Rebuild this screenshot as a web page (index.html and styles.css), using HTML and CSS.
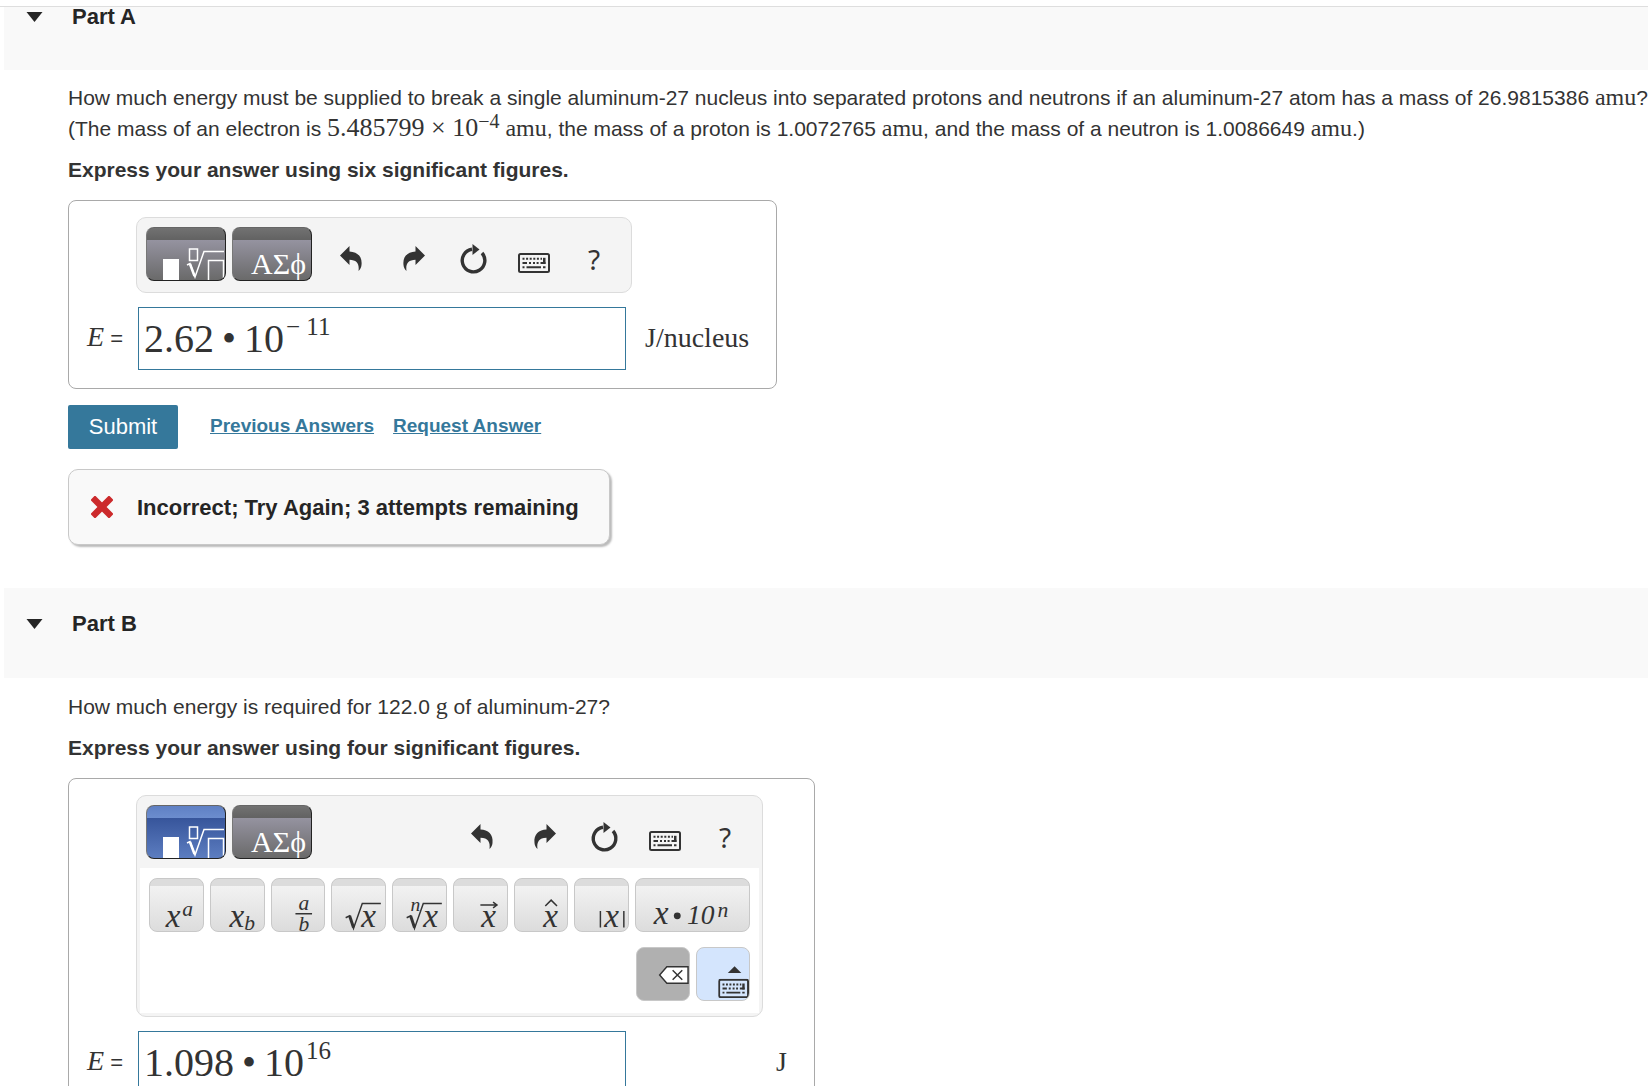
FILE: index.html
```html
<!DOCTYPE html>
<html lang="en">
<head>
<meta charset="utf-8">
<title>Nuclear binding energy</title>
<link rel="stylesheet" href="styles.css">
</head>
<body>
<svg class="defs" aria-hidden="true">
  <defs>
    <symbol id="undo" viewBox="0 0 60 54"><path d="M16 28.500L25.500 19V24.500C33 25 38.500 29 37.500 38C37.300 40.500 36.300 42.300 34.500 44C35.500 37 33 33 25.500 32.800V38Z"/></symbol>
    <symbol id="redo" viewBox="0 0 60 54"><path d="M41 28.500L31.500 19V24.500C24 25 18.500 29 19.500 38C19.700 40.500 20.700 42.300 22.500 44C21.500 37 24 33 31.500 32.800V38Z"/></symbol>
    <symbol id="reset" viewBox="0 0 60 54"><path d="M28 22.300A11.300 11.300 0 1 0 38 26" fill="none" stroke="#333" stroke-width="3.400"/><path d="M28.500 17L35.500 22.500L28.500 28Z"/></symbol>
    <symbol id="keyboard" viewBox="0 0 32 20"><rect x="1" y="1" width="30" height="18" rx="1.500" fill="none" stroke="#333" stroke-width="2"/><path d="M4.500 5.800H24" fill="none" stroke="#333" stroke-width="2" stroke-dasharray="2 1.600"/><path d="M4.500 10H9M11 10h2M15 10h2M18.600 10h2M22.500 10H27.500M4.500 14.300h2M8.500 14.300H23M25 14.300h2.500" fill="none" stroke="#333" stroke-width="2"/><path d="M25 4.800h2.500V11H25Z"/></symbol>
    <symbol id="template" viewBox="0 0 80 54"><path d="M17 32h16v22H17Z" fill="#fff"/><path d="M43.500 22h8v11.500h-8ZM62.500 54V33.500H77.500V54M41 38l3-1.500L49 50L58 24.500H78" fill="none" stroke="#fff" stroke-width="1.500"/><path d="M44 37l4.500 12" stroke="#fff" stroke-width="2.500"/></symbol>
    <symbol id="caret" viewBox="0 0 16 10"><path d="M0 0H16L8 10Z"/></symbol>
  </defs>
</svg>

<div class="topline"></div>

<section>
  <header class="part part-first">
    <svg class="caret" aria-hidden="true"><use href="#caret"/></svg>
    <h2>Part A</h2>
  </header>
  <div class="content">
    <p>How much energy must be supplied to break a single aluminum-27 nucleus into separated protons and neutrons if an aluminum-27 atom has a mass of 26.9815386 <span class="math">amu</span>?<br>(The mass of an electron is <span class="math number">5.485799 × 10<sup>−4</sup></span> <span class="math">amu</span>, the mass of a proton is 1.0072765 <span class="math">amu</span>, and the mass of a neutron is 1.0086649 <span class="math">amu</span>.)</p>
    <p class="instruction">Express your answer using six significant figures.</p>

    <div class="answer">
      <div class="palette">
        <div class="toolbar">
          <button class="tab" aria-label="Templates"><svg aria-hidden="true"><use href="#template"/></svg></button>
          <button class="tab greek">ΑΣϕ</button>
          <div class="tools">
            <button class="tool" aria-label="Undo"><svg aria-hidden="true"><use href="#undo"/></svg></button>
            <button class="tool" aria-label="Redo"><svg aria-hidden="true"><use href="#redo"/></svg></button>
            <button class="tool" aria-label="Reset"><svg aria-hidden="true"><use href="#reset"/></svg></button>
            <button class="tool" aria-label="Keyboard shortcuts"><svg class="keyboard" aria-hidden="true"><use href="#keyboard"/></svg></button>
            <button class="tool help">?</button>
          </div>
        </div>
      </div>
      <div class="label" id="label-a"><i>E</i> =</div>
      <div class="field" role="textbox" tabindex="0" aria-labelledby="label-a">2.62<b>•</b>10<sup>− 11</sup></div>
      <div class="unit">J/nucleus</div>
    </div>

    <div class="actions">
      <button class="submit">Submit</button>
      <a href="#">Previous Answers</a>
      <a href="#">Request Answer</a>
    </div>

    <div class="feedback">
      <svg viewBox="0 0 22 22" aria-hidden="true"><path d="M4 4L18 18M18 4L4 18" stroke="#cc2a2c" stroke-width="6.500" stroke-linecap="square"/></svg>
      <span>Incorrect; Try Again; 3 attempts remaining</span>
    </div>
  </div>
</section>

<section>
  <header class="part">
    <svg class="caret" aria-hidden="true"><use href="#caret"/></svg>
    <h2>Part B</h2>
  </header>
  <div class="content">
    <p>How much energy is required for 122.0 <span class="math">g</span> of aluminum-27?</p>
    <p class="instruction">Express your answer using four significant figures.</p>

    <div class="answer">
      <div class="palette palette-open">
        <div class="toolbar">
          <button class="tab active" aria-label="Templates"><svg aria-hidden="true"><use href="#template"/></svg></button>
          <button class="tab greek">ΑΣϕ</button>
          <div class="tools">
            <button class="tool" aria-label="Undo"><svg aria-hidden="true"><use href="#undo"/></svg></button>
            <button class="tool" aria-label="Redo"><svg aria-hidden="true"><use href="#redo"/></svg></button>
            <button class="tool" aria-label="Reset"><svg aria-hidden="true"><use href="#reset"/></svg></button>
            <button class="tool" aria-label="Keyboard shortcuts"><svg class="keyboard" aria-hidden="true"><use href="#keyboard"/></svg></button>
            <button class="tool help">?</button>
          </div>
        </div>
        <div class="panel">
          <div class="keys">
            <button class="key"><svg viewBox="0 0 54 54"><text x="16" y="48" class="x">x</text><text x="33" y="37" class="s">a</text></svg></button>
            <button class="key"><svg viewBox="0 0 54 54"><text x="19" y="48" class="x">x</text><text x="34" y="52" class="s">b</text></svg></button>
            <button class="key"><svg viewBox="0 0 54 54"><text x="27" y="31" class="s">a</text><path d="M24 35H41"/><text x="27" y="53" class="s">b</text></svg></button>
            <button class="key"><svg viewBox="0 0 54 54"><path d="M14 39l4-2L22 50L31 24.500H50"/><path d="M18 37l4 12" class="thick"/><text x="30" y="48" class="x">x</text></svg></button>
            <button class="key"><svg viewBox="0 0 54 54"><text x="18" y="32" class="n">n</text><path d="M14 39l4-2L22 50L31 24.500H50"/><path d="M18 37l4 12" class="thick"/><text x="31" y="48" class="x">x</text></svg></button>
            <button class="key"><svg viewBox="0 0 54 54"><path d="M27 26H44M40 23l4 3l-4 3"/><text x="28" y="48" class="x">x</text></svg></button>
            <button class="key"><svg viewBox="0 0 54 54"><path d="M31 27l6-6l6 6"/><text x="29" y="48" class="x">x</text></svg></button>
            <button class="key"><svg viewBox="0 0 54 54"><path d="M26 32V49M50 32V49"/><text x="30" y="48" class="x">x</text></svg></button>
            <button class="key"><svg viewBox="0 0 115 54"><text x="18" y="45" class="x">x</text><circle cx="42" cy="37" r="3.500"/><text x="52" y="45" class="d">10</text><text x="83" y="38" class="s">n</text></svg></button>
          </div>
          <div class="keys-end">
            <button class="key delete" aria-label="Delete"><svg viewBox="0 0 54 54" aria-hidden="true"><path d="M53 18.500H31L23.500 27L31 35.500H53Z" class="white"/><path d="M37 22l10 10M47 22l-10 10"/></svg></button>
            <button class="key close" aria-label="Close keyboard"><svg viewBox="0 0 54 54" aria-hidden="true"><path d="M32 25H46L39 18Z" class="solid"/><use href="#keyboard" x="22" y="31" width="32" height="20"/></svg></button>
          </div>
        </div>
      </div>
      <div class="label" id="label-b"><i>E</i> =</div>
      <div class="field" role="textbox" tabindex="0" aria-labelledby="label-b">1.098<b>•</b>10<sup>16</sup></div>
      <div class="unit">J</div>
    </div>
  </div>
</section>
</body>
</html>
```
FILE: styles.css
```css
* { box-sizing: border-box; }

html { overflow-x: hidden; }

body {
  margin: 0;
  background: #fff;
  color: #333;
  font: 21px/31px "Liberation Sans", Arial, sans-serif;
}

.defs { position: absolute; width: 0; height: 0; }

svg { fill: #333; }

button {
  margin: 0;
  padding: 0;
  border: 0;
  background: none;
  color: inherit;
  font: inherit;
}

.topline {
  height: 7px;
  border-bottom: 1px solid #dedede;
}

/* Part headings */
.part {
  display: flex;
  align-items: flex-start;
  gap: 29px;
  height: 90px;
  margin: 0 0 1px 4px;
  padding: 22px 22px 0;
  background: #f9f9f9;
  color: #252525;
}

.part-first { height: 63px; margin-bottom: 0; padding-top: 0; }

.part h2 { margin: 0; font-size: 22px; line-height: 28px; }
.part-first h2 { line-height: 20px; }

.caret { width: 17px; height: 10px; margin-top: 9px; fill: #252525; }
.part-first .caret { margin-top: 5px; }

.content { padding: 12px 0 0 68px; }

p { margin: 0; }
.instruction { margin: 10px 0 15px; font-weight: bold; }

.math { font: 24px/30px "Liberation Serif", "Times New Roman", serif; }
.math.number { font-size: 26px; }
.math sup { font-size: 20px; line-height: 0; vertical-align: 8px; }

/* Answer box */
.answer {
  display: grid;
  grid-template-columns: 67px max-content max-content;
  align-items: center;
  width: max-content;
  padding: 16px 27px 18px 0;
  border: 1px solid #a9a9a9;
  border-radius: 8px;
}

.palette {
  grid-column: 2;
  width: 496px;
  padding: 0 3px 2px;
  border: 1px solid #dcdcdc;
  border-radius: 10px;
  background: #f4f4f4;
}
.palette-open { width: 627px; padding-bottom: 3px; }

.toolbar {
  display: flex;
  gap: 6px;
  height: 72px;
  padding: 9px 4px 9px 6px;
}

.tab {
  width: 80px;
  height: 54px;
  overflow: hidden;
  border: 1px solid #222;
  border-top-color: #666;
  border-left-color: #777;
  border-radius: 8px;
  background: linear-gradient(#727272, #626262 12px, #9593a0 12px, #6a6a6a);
  color: #fff;
}
.tab.active { background: linear-gradient(#5f80c4, #6c8dce 12px, #37559b 12px, #5c7dc0); }
.tab svg { display: block; width: 80px; height: 54px; margin: -1px; }
.greek {
  padding: 19px 5px 0 0;
  font: 30px/34px "Liberation Serif", "Times New Roman", serif;
  text-align: right;
}

.tools { display: flex; margin-left: auto; }
.tool {
  display: flex;
  align-items: center;
  justify-content: center;
  width: 60px;
  height: 54px;
}
.help { padding-top: 9px; font: 28px/32px "Noto Sans", sans-serif; }
.tool svg { width: 60px; height: 54px; }
.tool .keyboard { width: 32px; height: 20px; margin-top: 17px; }

.panel { height: 145px; padding: 10px 9px 0; background: #fff; }
.keys { display: grid; grid-template-columns: repeat(8, 1fr) 115px; gap: 6px; }
.keys-end { display: flex; justify-content: flex-end; gap: 6px; margin-top: 15px; }

.key {
  height: 54px;
  overflow: hidden;
  border: 1px solid #c8c8c8;
  border-radius: 8px;
  background: linear-gradient(#dcdcdc 7px, #f2f2f2 7px, #dcdcdc);
}
.key svg {
  display: block;
  width: 100%;
  height: 54px;
  font-family: "Liberation Serif", "Times New Roman", serif;
  font-style: italic;
}
.key path { fill: none; stroke: #333; stroke-width: 1.5; }
.key .thick { stroke-width: 3; }
.key .white { fill: #fff; }
.key .solid { fill: #333; stroke: none; }
.key .x { font-size: 34px; }
.key .s { font-size: 22px; }
.key .n { font-size: 20px; }
.key .d { font-size: 28px; }
.delete, .close { width: 54px; }
.delete { background: #b0b0b0; }
.close { background: #d4e5fd; }

.label {
  grid-column: 1;
  margin-top: 12px;
  padding-left: 18px;
  font-size: 22px;
  line-height: 30px;
}
.label i, .unit { font-family: "Liberation Serif", "Times New Roman", serif; }
.label i { font-size: 28px; }

.field {
  width: 488px;
  height: 63px;
  margin: 14px 0 0 2px;
  padding: 0 5px;
  border: 1px solid #35789b;
  font: 40px/62px "Liberation Serif", "Times New Roman", serif;
}
.field sup { margin-left: 2px; font-size: 25px; line-height: 0; vertical-align: 17px; }
.field b { margin: 0 8px; font-weight: normal; }

.unit { margin-top: 12px; padding-left: 13px; font-size: 28px; line-height: 32px; }

/* Actions and feedback */
.actions { display: flex; align-items: center; gap: 19px; margin-top: 16px; }
.submit {
  width: 110px;
  height: 44px;
  margin-right: 13px;
  padding-bottom: 2px;
  border-radius: 2px;
  background: #35789b;
  color: #fff;
  font-size: 22px;
}
.actions a { padding-bottom: 2px; color: #35789b; font-size: 19px; line-height: 24px; font-weight: bold; }

.feedback {
  display: flex;
  align-items: center;
  gap: 24px;
  width: max-content;
  height: 76px;
  margin: 20px 0 43px;
  padding: 0 30px 0 22px;
  border: 1px solid #c8c8c8;
  border-radius: 10px;
  background: #f9f9f9;
  box-shadow: 2px 2px 2px #bbb;
  color: #252525;
  font-size: 22px;
  font-weight: bold;
}
.feedback svg { width: 22px; height: 22px; }
```
